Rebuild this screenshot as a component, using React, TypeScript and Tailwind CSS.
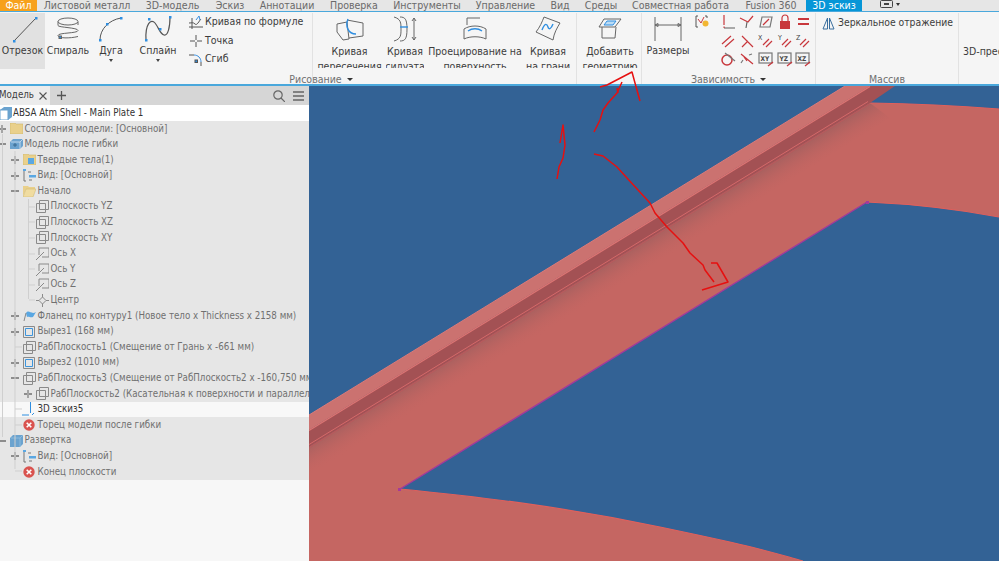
import React from 'react'

const font = "font-['DejaVu_Sans_Condensed','Liberation_Sans',sans-serif]"

const menu = [
  { label: 'Листовой металл', w: 'w-[100px]' },
  { label: '3D-модель', w: 'w-[71px]' },
  { label: 'Эскиз', w: 'w-[44px]' },
  { label: 'Аннотации', w: 'w-[70px]' },
  { label: 'Проверка', w: 'w-[64px]' },
  { label: 'Инструменты', w: 'w-[82px]' },
  { label: 'Управление', w: 'w-[75px]' },
  { label: 'Вид', w: 'w-[34px]' },
  { label: 'Среды', w: 'w-[48px]' },
  { label: 'Совместная работа', w: 'w-[111px]' },
  { label: 'Fusion 360', w: 'w-[70px]' },
]

const Dot = ({ x, y }: { x: number; y: number }) => <rect x={x - 1} y={y - 1} width="2.5" height="2.5" fill="#2f8ee0" />

const BigTool = ({ w, label, drop, active, children }: { w: string; label: string; drop?: boolean; active?: boolean; children: React.ReactNode }) => (
  <div className={`${w} h-[56px] shrink-0 flex flex-col items-center ${active ? 'bg-[#e1e1e1]' : ''}`}>
    <div className="h-[31px] flex items-center justify-center shrink-0">{children}</div>
    <div className="text-[10.5px] leading-[13px] text-[#3c3c3c] whitespace-nowrap">{label}</div>
    {drop && <div className="mt-[2px] border-x-[2.5px] border-t-[3px] border-x-transparent border-t-[#444]" />}
  </div>
)

const TwoLine = ({ w, a, b, children }: { w: string; a: string; b: string; children: React.ReactNode }) => (
  <div className={`${w} shrink-0 h-[55px] overflow-hidden flex flex-col items-center`}>
    <div className="h-[31px] w-full flex items-center justify-center shrink-0">{children}</div>
    <div className="text-[10.5px] leading-[14.5px] text-[#3c3c3c] text-center whitespace-nowrap">{a}<br />{b}</div>
  </div>
)

const Sep = () => <div className="w-px h-[71px] bg-[#e2e2e2] shrink-0" />

const GroupLabel = ({ w, text, drop }: { w: string; text: string; drop?: boolean }) => (
  <div className={`${w} shrink-0 h-[14px] pt-[5px] flex items-center justify-center gap-[5px] text-[10.5px] leading-[11px] text-[#707070]`}>
    {text}
    {drop && <span className="border-x-[3.5px] border-t-[3.5px] border-x-transparent border-t-[#333]" />}
  </div>
)

const Red = ({ children }: { children: React.ReactNode }) => (
  <svg width="16" height="16" viewBox="0 0 16 16" fill="none" stroke="#c8373c" strokeWidth="1.2" className="shrink-0">{children}</svg>
)

const constraints: React.ReactNode[] = [
  <><path d="M4 1v10" /><path d="M4 14h11" stroke="#777" /><rect x="3.5" y="12.5" width="1.2" height="1.5" fill="#c8373c" stroke="none" /></>,
  <><path d="M1 4l8 4 5-6" /><path d="M8 8l-1 6" stroke="#666" /></>,
  <><path d="M4 3h10l-2 10H2z" stroke="#777" /><path d="M5 11l6-6" /></>,
  <><path d="M5 7V4a3 3 0 016 0v3" stroke="#c8373c" /><rect x="3" y="7" width="10" height="8" fill="#c8373c" stroke="none" /></>,
  <><path d="M3 5h11M3 10h11" strokeWidth="2" /></>,
  <><path d="M2 11l9-8M5 14l9-8" /></>,
  <><path d="M3 3l11 11M3 14l6-6" /></>,
  <><path d="M5 12l6-6M8 14l6-6" /><text x="0" y="7" fontSize="7" fill="#444" stroke="none">X</text></>,
  <><path d="M5 12l6-6M8 14l6-6" /><text x="1" y="7" fontSize="7" fill="#444" stroke="none">Y</text></>,
  <><path d="M5 12l6-6M8 14l6-6" /><text x="1" y="7" fontSize="7" fill="#444" stroke="none">Z</text></>,
  <><circle cx="7" cy="9" r="5" strokeWidth="1.5" /><path d="M5 2l10 8" stroke="#777" /></>,
  <><path d="M2 3l12 10M5 6l3 4" /><path d="M4 9l-2 3M10 4l3-1" stroke="#777" /></>,
  <><rect x="1" y="2" width="13" height="10" stroke="#777" /><text x="2.5" y="9.5" fontSize="6.5" fontWeight="bold" fill="#444" stroke="none">XY</text><path d="M10 15l5-4" /></>,
  <><rect x="1" y="2" width="13" height="10" stroke="#777" /><text x="2.5" y="9.5" fontSize="6.5" fontWeight="bold" fill="#444" stroke="none">YZ</text><path d="M10 15l5-4" /></>,
  <><rect x="1" y="2" width="13" height="10" stroke="#777" /><text x="2.5" y="9.5" fontSize="6.5" fontWeight="bold" fill="#444" stroke="none">XZ</text><path d="M10 15l5-4" /></>,
]

const Ribbon = () => (
  <div className="h-[72px] bg-[#f5f5f5] flex flex-col overflow-hidden shrink-0">
    <div className="h-[58px] flex items-start pt-[1px] shrink-0">
      <BigTool w="w-[45px]" label="Отрезок" active>
        <svg width="30" height="28" viewBox="0 0 30 28" fill="none">
          <path d="M6 26L28 3" stroke="#555" />
          <Dot x={6} y={26} /><Dot x={28} y={3} />
        </svg>
      </BigTool>
      <BigTool w="w-[46px]" label="Спираль">
        <svg width="24" height="24" viewBox="0 0 24 24" fill="none" stroke="#666">
          <ellipse cx="12" cy="4.5" rx="10" ry="3.5" />
          <path d="M2 4.5v4c0 2 20 2 20 5s-20 2-20 5 12 3 20 1" />
          <path d="M22 5v3" />
          <Dot x={4} y={20} />
        </svg>
      </BigTool>
      <BigTool w="w-[40px]" label="Дуга" drop>
        <svg width="28" height="26" viewBox="0 0 28 26" fill="none">
          <path d="M3 24C3 13 12 4 24 2" stroke="#555" />
          <Dot x={3} y={24} /><Dot x={10} y={8} /><Dot x={24} y={2} />
        </svg>
      </BigTool>
      <BigTool w="w-[54px]" label="Сплайн" drop>
        <svg width="30" height="26" viewBox="0 0 30 26" fill="none">
          <path d="M3 24C2 8 8 2 12 7s5 11 9 12 6-8 6-18" stroke="#555" strokeWidth="1.2" />
          <Dot x={3} y={24} /><Dot x={6} y={3} /><Dot x={17} y={13} /><Dot x={27} y={1} />
        </svg>
      </BigTool>
      <div className="w-[127px] shrink-0 flex flex-col pl-[4px] text-[10.5px] text-[#3c3c3c] whitespace-nowrap">
        <div className="h-[18.5px] flex items-center gap-[2px]">
          <svg width="14" height="14" viewBox="0 0 14 14" fill="none" stroke="#555"><path d="M0 12h14M3 3v11M0 8c3 0 4-1 6 1s4-3 6-5" /><path d="M7 5l3-4 1 4" stroke="#3a8fe0" /></svg>
          Кривая по формуле
        </div>
        <div className="h-[18.5px] flex items-center gap-[2px]">
          <svg width="14" height="14" viewBox="0 0 14 14" fill="none" stroke="#555"><path d="M1 7h5M8 7h5M7 1v5M7 8v5" /></svg>
          Точка
        </div>
        <div className="h-[18.5px] flex items-center gap-[2px]">
          <svg width="14" height="14" viewBox="0 0 14 14" fill="none" stroke="#555"><path d="M0 3h5" /><path d="M5 3c4 0 7 3 7 7" stroke="#3a8fe0" /><path d="M12 10v4" /><Dot x={7} y={9} /></svg>
          Сгиб
        </div>
      </div>
      <Sep />
      <TwoLine w="w-[73px]" a="Кривая" b="пересечения">
        <svg width="28" height="24" viewBox="0 0 28 24" fill="none" stroke="#666"><path d="M1 7l10-2 2 17-6 1-6-8z" /><path d="M11 3l16 3v13l-14 2" /><path d="M12 2c-3 7 0 15 8 15" stroke="#2f8ee0" strokeWidth="1.4" /></svg>
      </TwoLine>
      <TwoLine w="w-[38px]" a="Кривая" b="силуэта">
        <svg width="24" height="26" viewBox="0 0 24 26" fill="none" stroke="#666"><path d="M1 1c7 2 7 6 7 12s0 10-7 12" /><path d="M7 1c5 0 7 2 7 12s-2 12-7 12" /><path d="M7 11h8" stroke="#2f8ee0" strokeWidth="1.4" /><path d="M21 2v22M19 5l2-3 2 3M19 21l2 3 2-3" /></svg>
      </TwoLine>
      <TwoLine w="w-[102px]" a="Проецирование на" b="поверхность">
        <svg width="26" height="26" viewBox="0 0 26 26" fill="none" stroke="#666"><path d="M5 2h13M5 2v7" /><path d="M2 13c6-4 16-4 22 0v10c-6-3-16-3-22 0z" /><path d="M6 15c4-3 10-3 14 0" stroke="#2f8ee0" strokeWidth="1.4" /></svg>
      </TwoLine>
      <TwoLine w="w-[44px]" a="Кривая" b="на грани">
        <svg width="26" height="26" viewBox="0 0 26 26" fill="none" stroke="#666"><path d="M9 1l16 6c-3 5-6 10-7 17L1 16C5 11 7 6 9 1z" /><path d="M7 14c3-8 5-6 6-3s3 2 5-3" stroke="#2f8ee0" strokeWidth="1.4" /></svg>
      </TwoLine>
      <div className="w-[6px] shrink-0" />
      <Sep />
      <div className="w-[2px] shrink-0" />
      <TwoLine w="w-[62px]" a="Добавить" b="геометрию">
        <svg width="24" height="22" viewBox="0 0 24 22" fill="none" stroke="#666"><path d="M6 1h17l-6 8H1z" /><path d="M9 3h9l-3 4H6z" stroke="#2f8ee0" fill="#bcdcf5" /><path d="M4 9v11h13l1-11" /></svg>
      </TwoLine>
      <Sep />
      <BigTool w="w-[52px]" label="Размеры">
        <svg width="28" height="24" viewBox="0 0 28 24" fill="none" stroke="#666"><path d="M1 0v24M27 0v24M1 8h26M1 8l3-1.5v3zM27 8l-3-1.5v3z" /></svg>
      </BigTool>
      <div className="w-[25px] shrink-0 pt-[2px] pl-[1px]">
        <svg width="15" height="14" viewBox="0 0 15 14" fill="none" stroke="#555"><path d="M3 1H1v11h2M10 1h2v2" /><path d="M3 4l3 4 3-6" stroke="#c8373c" /><circle cx="10.5" cy="8.5" r="3" fill="#f2b632" stroke="none" /></svg>
      </div>
      <div className="w-[94px] shrink-0 grid grid-cols-[repeat(5,18.75px)] grid-rows-[repeat(3,18.5px)]">
        {constraints.map((c, i) => (
          <div key={i} className="flex items-center justify-center">
            <Red>{c}</Red>
          </div>
        ))}
      </div>
      <div className="w-[2px] shrink-0" />
      <Sep />
      <div className="w-[142px] shrink-0 flex items-center h-[18px] gap-[3px] pl-[6px] text-[10.3px] text-[#3c3c3c] mt-[1px] whitespace-nowrap">
        <svg width="13" height="13" viewBox="0 0 13 13" fill="none" stroke="#3a6f9e"><path d="M5.5 1L1 12h4.5zM7.5 1L12 12H7.5z" /></svg>
        Зеркальное отражение
      </div>
      <Sep />
      <div className="pl-[4px] pt-[32px] text-[10.5px] leading-[13px] text-[#3c3c3c] whitespace-nowrap">3D-преобразование</div>
    </div>
    <div className="h-[14px] flex">
      <GroupLabel w="w-[642px]" text="Рисование" drop />
      <GroupLabel w="w-[173px]" text="Зависимость" drop />
      <div className="w-px shrink-0" />
      <GroupLabel w="w-[142px]" text="Массив" />
    </div>
  </div>
)

const Exp = ({ kind }: { kind?: 'plus' | 'minus' }) => (
  <span className="w-[11px] h-[11px] shrink-0 flex items-center justify-center">
    {kind && (
      <svg width="8" height="8" viewBox="0 0 8 8" stroke="#8d8d8d" strokeWidth="2">
        <path d="M0 4h8" />
        {kind === 'plus' && <path d="M4 0v8" stroke="#a5a5a5" />}
      </svg>
    )}
  </span>
)

type IconKind = 'folder' | 'body' | 'bodies' | 'view' | 'open' | 'plane' | 'axis' | 'center' | 'flange' | 'cut' | 'sketch' | 'error' | 'flat' | 'part'

const TreeIcon = ({ kind }: { kind: IconKind }) => {
  if (kind === 'folder' || kind === 'bodies')
    return (
      <svg width="13" height="11" viewBox="0 0 13 11">
        <path d="M0 0h5l1 1h7v10H0z" fill="#e9d08b" stroke="#cdb56c" strokeWidth="0.6" />
        {kind === 'bodies' && <path d="M5 4h6v6H5z" fill="#5aa7e2" />}
      </svg>
    )
  if (kind === 'open')
    return (
      <svg width="13" height="11" viewBox="0 0 13 11">
        <path d="M0 0h5l1 1h6v2H3L0 10z" fill="#e9d08b" />
        <path d="M3 3h10l-3 8H0z" fill="#f0dca0" stroke="#cdb56c" strokeWidth="0.5" />
      </svg>
    )
  if (kind === 'body')
    return (
      <svg width="13" height="12" viewBox="0 0 13 12">
        <path d="M0 4l3-3h10v7l-3 3H0z" fill="#6ba3cf" />
        <path d="M1 4h9v7M10 4l3-3" fill="none" stroke="#dfeaf4" strokeWidth="0.7" />
        <path d="M3 7h4M5 5v4" stroke="#315f86" strokeWidth="0.8" />
      </svg>
    )
  if (kind === 'flat')
    return (
      <svg width="13" height="12" viewBox="0 0 13 12">
        <path d="M0 3l3-3h10v9l-3 3H0z" fill="#6ba3cf" />
        <path d="M1 3h9v9M10 3l3-3" fill="none" stroke="#9cc4e2" strokeWidth="0.7" />
      </svg>
    )
  if (kind === 'view')
    return (
      <svg width="13" height="13" viewBox="0 0 13 13" fill="none">
        <path d="M3 1H1v11h2" stroke="#777" />
        <path d="M0 0h3v2H0zM6 6h7v2.5H6z" fill="#5aa7e2" />
        <path d="M5 3h3M6 11h3" stroke="#777" />
      </svg>
    )
  if (kind === 'plane')
    return (
      <svg width="13" height="13" viewBox="0 0 13 13" fill="none" stroke="#8a8a8a">
        <path d="M0.5 3.5h9v9h-9z" />
        <path d="M3.5 0.5h9v9h-9z" />
      </svg>
    )
  if (kind === 'axis')
    return (
      <svg width="13" height="13" viewBox="0 0 13 13" fill="none" stroke="#8a8a8a">
        <path d="M3 1h10v9H6M3 1v7M0 13L8 5" />
      </svg>
    )
  if (kind === 'center')
    return (
      <svg width="13" height="13" viewBox="0 0 13 13" fill="none" stroke="#8a8a8a">
        <path d="M6.5 3L10 6.5 6.5 10 3 6.5zM0 6.5h3M10 6.5h3M6.5 0v3M6.5 10v3" />
      </svg>
    )
  if (kind === 'flange')
    return (
      <svg width="13" height="12" viewBox="0 0 13 12" fill="none">
        <path d="M3 3c3-4 5 2 10-1l-3 5c-3 1-4-1-6 0z" fill="#5aa7e2" />
        <path d="M3 3l-2 8" stroke="#888" />
      </svg>
    )
  if (kind === 'cut')
    return (
      <svg width="12" height="12" viewBox="0 0 12 12" fill="none">
        <path d="M0.5 0.5h11v11H0.5z" stroke="#8a8a8a" />
        <path d="M2.5 2.5h7v7h-7z" stroke="#3d95dc" />
      </svg>
    )
  if (kind === 'sketch')
    return (
      <svg width="14" height="14" viewBox="0 0 14 14" fill="none" stroke="#2f8ee0">
        <path d="M8.5 0v11M0 13h7M10 13l2-2" />
      </svg>
    )
  if (kind === 'error')
    return (
      <svg width="12" height="12" viewBox="0 0 12 12" fill="none">
        <circle cx="6" cy="6" r="5.7" fill="#d9534f" />
        <path d="M3.7 3.7l4.6 4.6M8.3 3.7l-4.6 4.6" stroke="#fff" strokeWidth="1.6" />
      </svg>
    )
  return (
    <svg width="12" height="13" viewBox="0 0 12 13">
      <path d="M0 3l4-3h8v10l-4 3V3z" fill="#6ba3cf" />
      <path d="M0 3h8v10H0z" fill="#fff" stroke="#6ba3cf" />
    </svg>
  )
}

type Row = { d: number; exp?: 'plus' | 'minus'; icon: IconKind; text: string; tone?: 'white' }

const rows: Row[] = [
  { d: 0, exp: 'plus', icon: 'folder', text: 'Состояния модели: [Основной]' },
  { d: 0, exp: 'minus', icon: 'body', text: 'Модель после гибки' },
  { d: 1, exp: 'plus', icon: 'bodies', text: 'Твердые тела(1)' },
  { d: 1, exp: 'plus', icon: 'view', text: 'Вид: [Основной]' },
  { d: 1, exp: 'minus', icon: 'open', text: 'Начало' },
  { d: 2, icon: 'plane', text: 'Плоскость YZ' },
  { d: 2, icon: 'plane', text: 'Плоскость XZ' },
  { d: 2, icon: 'plane', text: 'Плоскость XY' },
  { d: 2, icon: 'axis', text: 'Ось X' },
  { d: 2, icon: 'axis', text: 'Ось Y' },
  { d: 2, icon: 'axis', text: 'Ось Z' },
  { d: 2, icon: 'center', text: 'Центр' },
  { d: 1, exp: 'plus', icon: 'flange', text: 'Фланец по контуру1 (Новое тело x Thickness x 2158 мм)' },
  { d: 1, exp: 'plus', icon: 'cut', text: 'Вырез1 (168 мм)' },
  { d: 1, icon: 'plane', text: 'РабПлоскость1 (Смещение от Грань x -661 мм)' },
  { d: 1, exp: 'plus', icon: 'cut', text: 'Вырез2 (1010 мм)' },
  { d: 1, exp: 'minus', icon: 'plane', text: 'РабПлоскость3 (Смещение от РабПлоскость2 x -160,750 мм)' },
  { d: 2, exp: 'plus', icon: 'plane', text: 'РабПлоскость2 (Касательная к поверхности и параллельно плоскости)' },
  { d: 1, icon: 'sketch', text: '3D эскиз5', tone: 'white' },
  { d: 1, icon: 'error', text: 'Торец модели после гибки' },
  { d: 0, exp: 'minus', icon: 'flat', text: 'Развертка' },
  { d: 1, exp: 'plus', icon: 'view', text: 'Вид: [Основной]' },
  { d: 1, icon: 'error', text: 'Конец плоскости' },
]

const Sidebar = () => (
  <div className="w-[309px] shrink-0 bg-[#f7f7f7] flex flex-col overflow-hidden">
    <div className="h-[19px] bg-[#d6d6d6] flex items-center shrink-0">
      <div className="h-full w-[51px] bg-[#ececec] flex items-center text-[9.7px] text-[#3c3c3c] -ml-[1px]">
        <span className="w-[40px] shrink-0">Модель</span>
        <svg width="8" height="8" viewBox="0 0 8 8" stroke="#555" strokeWidth="1.1"><path d="M0.5 0.5l7 7M7.5 0.5l-7 7" /></svg>
      </div>
      <svg width="9" height="9" viewBox="0 0 9 9" stroke="#555" strokeWidth="1.3" className="ml-[7px]"><path d="M0 4.5h9M4.5 0v9" /></svg>
      <div className="ml-auto flex items-center gap-[8px] pr-[5px]">
        <svg width="12" height="12" viewBox="0 0 12 12" fill="none" stroke="#666" strokeWidth="1.2"><circle cx="5" cy="5" r="4.2" /><path d="M8 8l4 4" /></svg>
        <svg width="11" height="10" viewBox="0 0 11 10" stroke="#666" strokeWidth="1.5"><path d="M0 1h11M0 5h11M0 9h11" /></svg>
      </div>
    </div>
    <div className="h-[16px] bg-white flex items-center shrink-0 text-[9.7px] text-[#333] whitespace-nowrap">
      <TreeIcon kind="part" />
      <span className="ml-[1px]">ABSA Atm Shell - Main Plate 1</span>
    </div>
    <div className="relative bg-[#e6e6e6] h-[359px] overflow-hidden shrink-0 text-[9.7px] text-[#707070]">
      {rows.map((r, i) => (
        <div
          key={i}
          className={`h-[15.6px] flex items-center whitespace-nowrap ${r.tone === 'white' ? 'bg-[#f8f8f8] text-[#333]' : ''}`}
        >
          <div className={r.d === 0 ? '-ml-[4px] shrink-0' : r.d === 1 ? 'ml-[9px] shrink-0' : 'ml-[22px] shrink-0'}>
            <Exp kind={r.exp} />
          </div>
          <div className="w-[14px] ml-[2px] shrink-0 flex items-center justify-center"><TreeIcon kind={r.icon} /></div>
          <span className="ml-[1.5px]">{r.text}</span>
        </div>
      ))}
      {/* линии дерева */}
      <svg width="36" height="359" viewBox="0 0 36 359" fill="none" stroke="#cfcfcf" className="absolute left-0 top-0">
        <path d="M2.5 13V316M15 30V348M28.5 78V178" />
        <path d="M29 86h6M29 101h6M29 117h6M29 133h6M29 148h6M29 164h6M29 179h6M15 226h7M15 288h7M15 304h7M15 350h7" />
      </svg>
    </div>
  </div>
)

const Viewport = () => (
  <div className="flex-1 min-w-0 bg-[#336295] overflow-hidden">
    <svg width="690" height="475" viewBox="309 86 690 475" className="block">
      <defs>
        <linearGradient id="shadeBand" gradientUnits="userSpaceOnUse" x1="600" y1="268" x2="614" y2="291">
          <stop offset="0" stopColor="#a8605f" />
          <stop offset="1" stopColor="#c56662" stopOpacity="0" />
        </linearGradient>
      </defs>
      {/* лист */}
      <path d="M309 447L870 103Q935 104 999 109V217Q935 205 867 202L400 489C480 497 560 506 660 527S760 549 803 561H309Z" fill="#c56662" />
      <path d="M309 447L870 103L890 118L309 480Z" fill="url(#shadeBand)" />
      <path d="M870 103Q935 104 999 109M867 202Q935 205 999 217M400 489C480 497 560 506 660 527S760 549 803 561" stroke="#e0605c" strokeWidth="1.1" fill="none" />
      {/* отбортовка */}
      <path d="M309 415L845 86H870L309 430Z" fill="#cb7270" />
      <path d="M309 430L870 86H895L870 103L309 447Z" fill="#a35154" />
      <path d="M309 415L845 86" stroke="#dc7a78" strokeWidth="1" fill="none" />
      <path d="M309 430.5L870 86.5" stroke="#db7472" strokeWidth="1.4" fill="none" />
      <path d="M309 444.5L868 101.5" stroke="#d4696a" strokeWidth="1" fill="none" />
      <path d="M309 447.5L870 103.5" stroke="#b85a5c" strokeWidth="1.2" fill="none" />
      <path d="M400 489L867 202" stroke="#a13a9c" strokeWidth="1.4" fill="none" />
      <rect x="398" y="488" width="3" height="3" fill="#a53a9a" />
      <rect x="866" y="201" width="3" height="3" fill="#a53a9a" />
    </svg>
  </div>
)

const Scribbles = () => (
  <svg width="999" height="561" viewBox="0 0 999 561" fill="none" stroke="#e61010" strokeWidth="1.5" strokeLinejoin="round" className="absolute left-0 top-0 pointer-events-none">
    <polyline points="600,87 607,85 632,72 635,83 640,101" />
    <polyline points="594,132 600,120 603,110 608,103 617,93 622,82" />
    <polyline points="617,88 618,93" />
    <polyline points="560,143 563,125 565,145 563,158 559,167 557,179" />
    <polyline points="594,154 603,156 617,167 627,178 650,203 655,213 667,227 683,243 690,253 703,265 705,270 714,282" />
    <polyline points="711,263 717,263 728,282 702,290" />
  </svg>
)

export default function App() {
  return (
    <div className={`relative w-[999px] h-[561px] overflow-hidden flex flex-col bg-white ${font}`}>
      <div className="h-[11px] bg-[#e6e6e6] flex items-start overflow-hidden shrink-0 text-[10.5px] leading-[10px] text-[#6a6a6a] whitespace-nowrap">
        <div className="w-[37px] h-full bg-[#f7a11c] text-white flex justify-center shrink-0">Файл</div>
        {menu.map((m) => (
          <div key={m.label} className={`${m.w} shrink-0 flex justify-center`}>{m.label}</div>
        ))}
        <div className="w-[56px] h-full bg-[#0696d7] text-white flex justify-center shrink-0">3D эскиз</div>
        <div className="ml-[18px] flex items-center gap-[3px]">
          <svg width="13" height="8" viewBox="0 0 13 8" fill="none" stroke="#444"><rect x="0.5" y="0.5" width="12" height="7" rx="1" /><path d="M4 4h5" strokeWidth="2" /></svg>
          <span className="border-x-[2.5px] border-t-[3px] border-x-transparent border-t-[#333]" />
        </div>
      </div>
      <div className="h-px bg-[#4aa8dc] shrink-0" />
      <Ribbon />
      <div className="h-[2px] bg-[#4aa8dc] shrink-0" />
      <div className="flex-1 min-h-0 flex">
        <Sidebar />
        <Viewport />
      </div>
      <Scribbles />
    </div>
  )
}
